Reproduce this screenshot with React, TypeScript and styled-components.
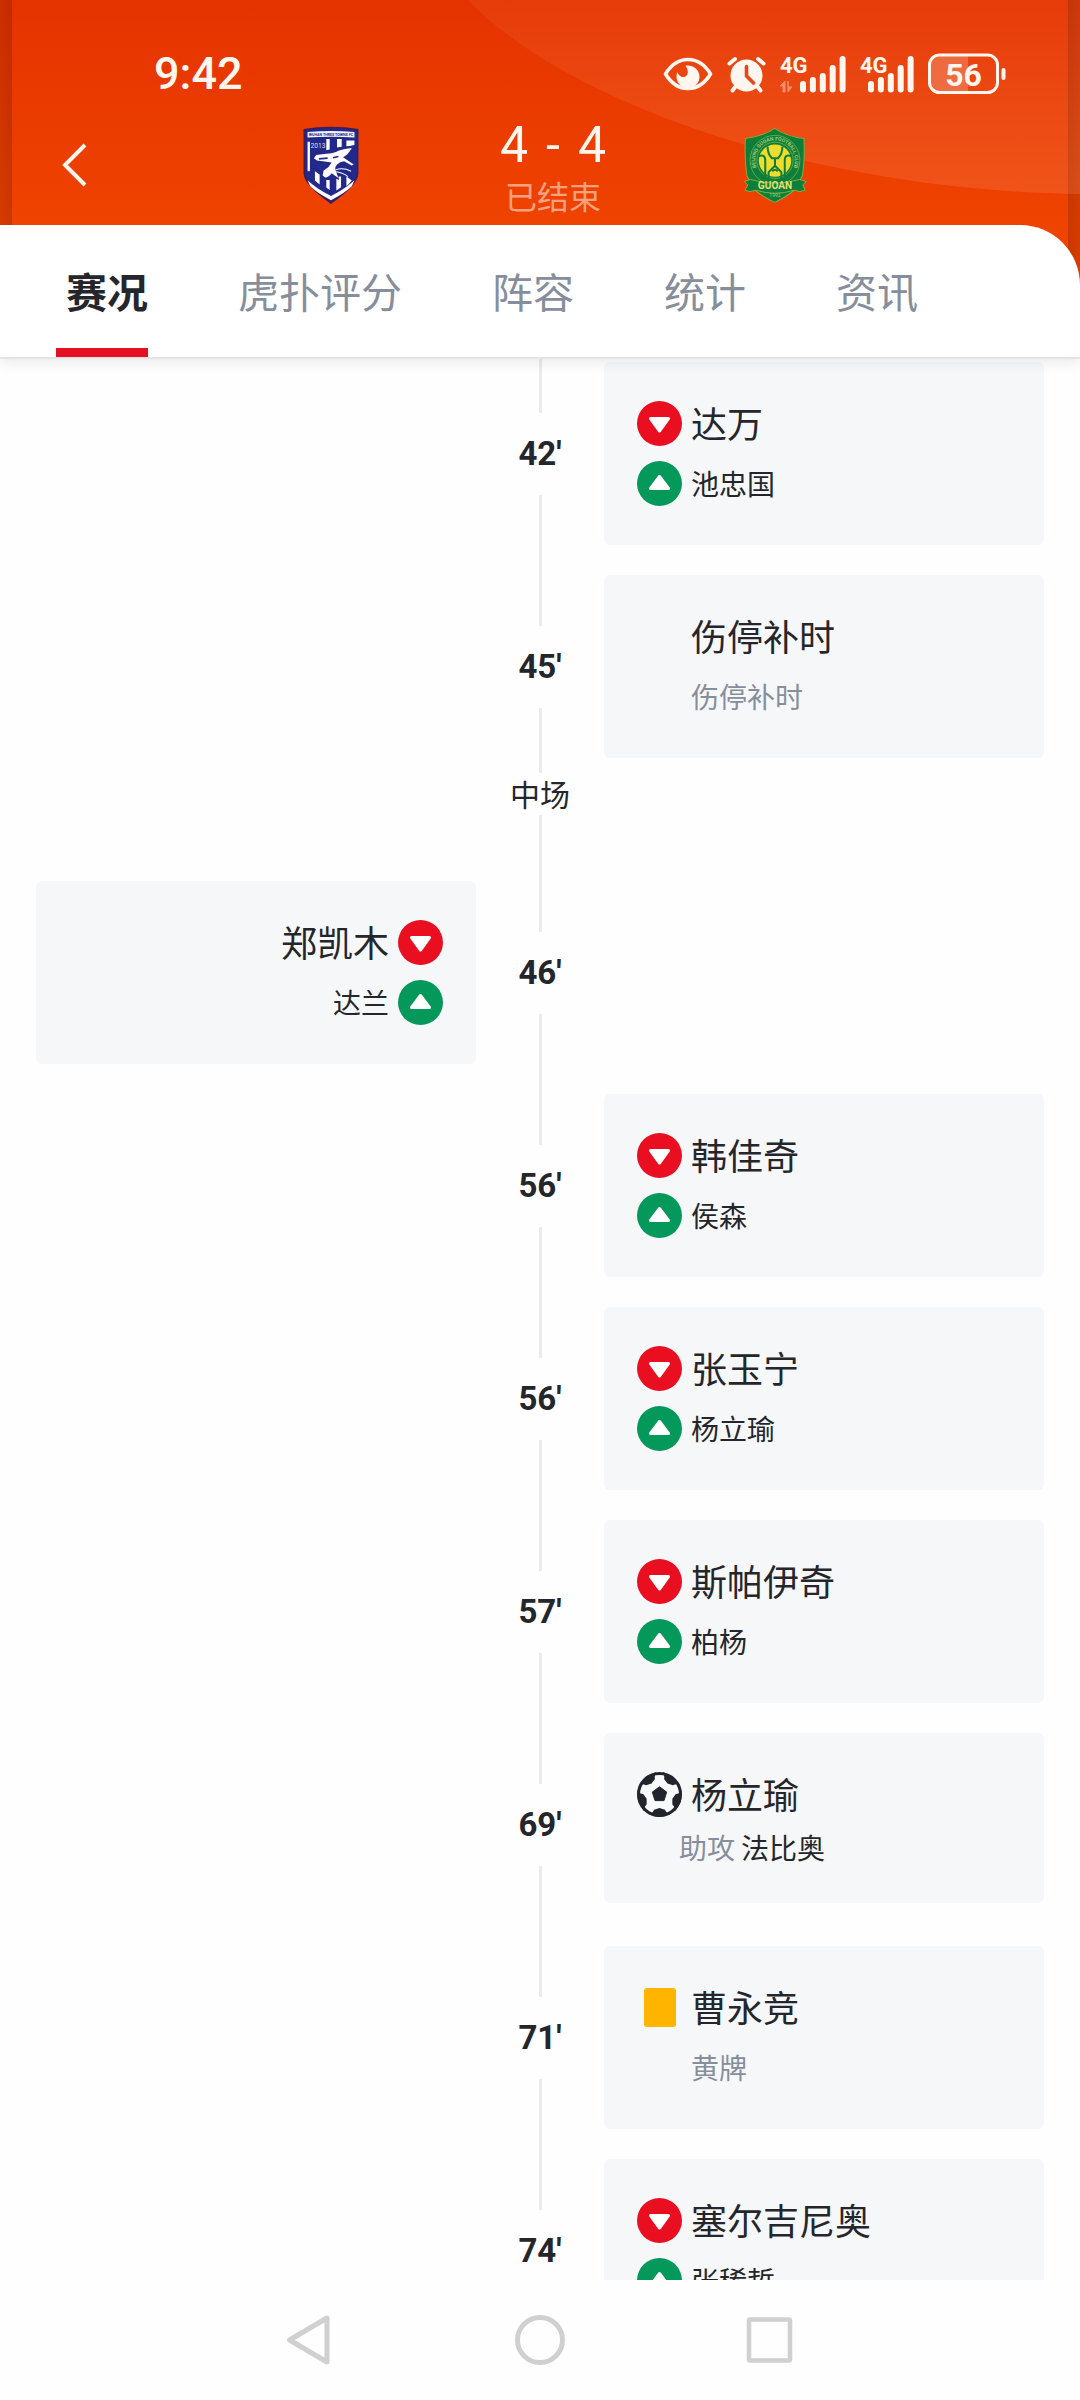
import React from "react";
import styled, { createGlobalStyle } from "styled-components";

const latin = `Roboto, "Noto Sans CJK SC", sans-serif`;

const GlobalStyle = createGlobalStyle`
  * { box-sizing: border-box; }
  body {
    margin: 0;
    background: #fefefe;
    color: #24262b;
    font-family: "Noto Sans CJK SC", "Noto Sans", sans-serif;
  }
  button {
    font: inherit;
    color: inherit;
    background: none;
    border: 0;
    padding: 0;
    cursor: pointer;
  }
  svg { display: block; }
`;

const Screen = styled.div`
  display: flex;
  flex-direction: column;
  height: 100vh;
`;

/* ---------- header ---------- */

const Hero = styled.header`
  position: relative;
  z-index: 1;
  flex: none;
  background:
    linear-gradient(to right, rgba(0, 0, 0, 0.1), rgba(0, 0, 0, 0.16)) left / 12px 100% no-repeat,
    linear-gradient(to left, rgba(0, 0, 0, 0.1), rgba(0, 0, 0, 0.16)) right / 12px 100% no-repeat,
    linear-gradient(#e53300, #ef4300 225px);
  box-shadow: 0 4px 12px rgba(0, 0, 0, 0.08);
`;

const Swoosh = styled.svg`
  position: absolute;
  inset: 0 0 auto 0;
  width: 100%;
  height: 194px;
`;

const StatusBar = styled.div`
  position: relative;
  display: flex;
  align-items: center;
  justify-content: space-between;
  height: 116px;
  padding: 46px 74px 14px 154px;
  color: #fff7ef;
`;

const Clock = styled.time`
  font: 500 45px/56px ${latin};
`;

const StatusIcons = styled.div`
  display: flex;
  align-items: center;
  gap: 14px;
`;

const MatchBar = styled.div`
  position: relative;
  display: flex;
  align-items: center;
  padding: 0 74px 11px 0;
  color: #fff7ef;
`;

const BackButton = styled.button`
  display: flex;
  justify-content: flex-end;
  width: 100px;
  padding: 14px 12px 14px 0;
`;

const Teams = styled.div`
  flex: 1;
  display: flex;
  align-items: center;
  justify-content: center;
  gap: 134px;
`;

const Result = styled.div`
  display: flex;
  flex-direction: column;
  align-items: center;
  gap: 6px;
  min-width: 108px;
  padding: 1px 0 3px;
`;

const Score = styled.div`
  display: flex;
  gap: 18px;
  font: 400 50px/56px ${latin};
`;

const ResultStatus = styled.div`
  font-size: 32px;
  line-height: 32px;
  color: rgba(255, 247, 239, 0.55);
`;

const Tabs = styled.nav`
  position: relative;
  display: flex;
  gap: 80px;
  padding: 0 56px;
  background: #fff;
  border-bottom: 2px solid #e4e4e7;
  border-top-right-radius: 60px;
`;

const Tab = styled.button<{ $active?: boolean }>`
  height: 132px;
  padding: 6px 0 0 10px;
  border-bottom: 9px solid ${(p) => (p.$active ? "#e60f22" : "transparent")};
  font-size: 41px;
  line-height: 48px;
  font-weight: ${(p) => (p.$active ? 700 : 400)};
  color: ${(p) => (p.$active ? "#24262b" : "#868e9c")};
`;

/* ---------- timeline ---------- */

const Scroller = styled.main`
  flex: 1;
  min-height: 0;
  overflow-y: auto;
  scrollbar-width: none;
`;

const Timeline = styled.ol`
  list-style: none;
  margin: -12px 0 0;
  padding: 0 36px;
`;

const EventRow = styled.li`
  display: grid;
  grid-template-columns: 1fr 128px 1fr;
  min-height: 213px;
`;

const Axis = styled.div`
  grid-column: 2;
  grid-row: 1;
  display: flex;
  flex-direction: column;
  align-items: center;
`;

const Line = styled.span`
  flex: 1;
  width: 3px;
  background: #ebebed;
`;

const Minute = styled.time`
  font: 700 33px/82px ${latin};
`;

const Card = styled.article<{ $side: "home" | "away" }>`
  grid-column: ${(p) => (p.$side === "home" ? 1 : 3)};
  grid-row: 1;
  align-self: start;
  display: flex;
  flex-direction: column;
  gap: 15px;
  margin: 15px 0;
  padding: 39px 33px;
  border-radius: 6px;
  background: #f6f7f9;
`;

const Entry = styled.div<{ $side: "home" | "away" }>`
  display: flex;
  flex-direction: ${(p) => (p.$side === "home" ? "row-reverse" : "row")};
  align-items: center;
  gap: 9px;
  min-height: 45px;
`;

const IconSlot = styled.span`
  flex: none;
  display: flex;
  justify-content: center;
  width: 45px;
`;

const Title = styled.span`
  padding-bottom: 3px;
  font-size: 36px;
  line-height: 42px;
`;

const Detail = styled.span<{ $muted?: boolean }>`
  padding-bottom: 2px;
  font-size: 28px;
  line-height: 30px;
  color: ${(p) => (p.$muted ? "#868e9c" : "inherit")};
`;

const Assist = styled.div`
  display: flex;
  gap: 6px;
  padding-left: 42px;
`;

const YellowCard = styled.span`
  width: 32px;
  height: 39px;
  border-radius: 3px;
  background: #ffb400;
`;

const BreakRow = styled.li`
  display: flex;
  flex-direction: column;
  align-items: center;
  height: 93px;
  font-size: 30px;
  line-height: 40px;
`;

const BreakLabel = styled.span`
  padding-bottom: 2px;
`;

/* ---------- system navigation ---------- */

const SystemNav = styled.footer`
  flex: none;
  display: flex;
  align-items: center;
  justify-content: center;
  gap: 180px;
  height: 120px;
`;

/* ---------- drawings ---------- */

const EyeIcon = () => (
  <svg width="50" height="34" viewBox="0 0 50 34" aria-hidden="true">
    <path d="M2.500 17C8 8 16 2.500 25 2.500S42 8 47.500 17C42 26 34 31.500 25 31.500S8 26 2.500 17Z" fill="none" stroke="currentColor" strokeWidth="3.600" strokeLinejoin="round" />
    <path d="M25 8.500c6.500 0 11.500 5 11.500 11.300S31.500 31 25 31 13.500 26 13.500 19.500c0-1.500.3-3 .8-4.200 1.500 3.500 4 5.200 6.700 4.700 4.500-.8 5-6.500 1.500-11.200.8-.2 1.700-.3 2.500-.3Z" fill="currentColor" />
  </svg>
);

const AlarmIcon = () => (
  <svg width="39" height="37" viewBox="0 0 39 37" aria-hidden="true">
    <g stroke="currentColor" strokeWidth="4" strokeLinecap="round">
      <path d="M2.500 7.500 8 3M36.500 7.500 31 3M9 30l-3.500 4.500M30 30l3.500 4.500" />
    </g>
    <circle cx="19.500" cy="19.500" r="16" fill="currentColor" />
    <path d="M19.500 10.500V20l7 7" fill="none" stroke="#e8461a" strokeWidth="3.600" strokeLinecap="round" strokeLinejoin="round" />
  </svg>
);

const barTops = [25, 21, 17, 9, 0];

const SignalIcon = ({ data }: { data?: boolean }) => {
  const start = data ? 20 : 8;
  return (
    <svg width={start + 46} height="49" viewBox={`0 -6 ${start + 46} 49`} aria-hidden="true">
      <text x="0" y="17" fontFamily="Roboto, sans-serif" fontWeight="700" fontSize="22" fill="currentColor">4G</text>
      {data && (
        <path d="M0 30 5 25v11H3v-6ZM8 25v6h4l-4 5Z" fill="currentColor" stroke="currentColor" opacity="0.4" />
      )}
      {barTops.map((top, i) => (
        <rect key={top} x={start + i * 9.900} y={top} width="6" height={36.500 - top} rx="3" fill="currentColor" />
      ))}
    </svg>
  );
};

const BatteryIcon = () => (
  <svg width="78" height="42" viewBox="0 0 78 42" aria-hidden="true">
    <path d="M10 2h30v38H10c-5 0-8-3-8-8V10c0-5 3-8 8-8Z" fill="currentColor" opacity="0.22" />
    <rect x="1.500" y="2" width="68" height="37.500" rx="10" fill="none" stroke="currentColor" strokeWidth="3" />
    <rect x="73.500" y="15" width="4" height="12" rx="2" fill="currentColor" />
    <text x="35.500" y="32.500" textAnchor="middle" fontFamily="Roboto, sans-serif" fontWeight="700" fontSize="32" fill="currentColor">56</text>
  </svg>
);

const HomeCrest = () => (
  <svg width="68" height="78" viewBox="53 45 202 233" role="img" aria-label="武汉三镇">
    <path d="M72 54Q154 40 236 54V188Q234 222 154 278 74 222 72 188Z" fill="#3b1c5c" />
    <path d="M77 58Q154 46 231 58V187Q229 218 154 270 79 218 77 187Z" fill="#22298a" />
    <path d="M84 63Q154 57 224 63V79Q154 75 84 79Z" fill="#f3f4fb" />
    <text x="154" y="75" textAnchor="middle" fontFamily="Roboto, sans-serif" fontWeight="700" fontSize="11" fill="#22298a">WUHAN THREE TOWNS FC</text>
    <g fill="#fff">
      <path d="M84 92h7v88h-7Z" />
      <path d="M140 84h10v34h-10ZM172 84h14v26h-14ZM200 88h24v14l-24 5Z" />
      <path d="M106 180l14 10v30l-14-12ZM140 206h10v30l-10-7ZM170 196h14v32l-14 10ZM200 196l16 12-10 12-6 4Z" />
      <path d="M84 207Q110 232 154 254 198 232 224 207L216 225Q200 242 154 267 108 242 92 225Z" />
    </g>
    <path d="M98 138 112 124 180 108 224 104 214 134 196 144 226 166 190 158 176 166 220 194 176 192 178 206 154 196 138 206 122 194 128 168 104 150Z" fill="#22298a" />
    <path d="M216 111Q205 132 190 138L222 160 216 163 193 150Q180 151 172 160 164 168 168 178L176 200 156 186Q148 198 136 199L129 192 132 178 146 168 156 154 130 150 112 148 103 141 110 132 140 128Q164 126 178 118 194 114 216 111Z" fill="#fff" />
    <path d="M118 143l26-2M160 140l16-4" fill="none" stroke="#22298a" strokeWidth="5" />
    <path d="M168 176Q190 168 214 180M164 182Q185 182 205 196" fill="none" stroke="#fff" strokeWidth="3" />
    <text x="115" y="112" textAnchor="middle" fontFamily="Roboto, sans-serif" fontSize="20" fill="#d9dcf2">2013</text>
  </svg>
);

const AwayCrest = () => (
  <svg width="68" height="78" viewBox="62 48 202 230" role="img" aria-label="北京国安">
    <defs>
      <path id="crest-arc" d="M117 186A59 59 0 1 1 209 186" />
    </defs>
    <path d="M162 54Q196 78 249 84Q252 150 244 196L220 238Q196 258 162 274Q128 258 104 238L80 196Q72 150 75 84Q128 78 162 54Z" fill="#0d7f3b" stroke="#86a83a" strokeWidth="3" />
    <circle cx="163" cy="149" r="74" fill="none" stroke="#8fb944" strokeWidth="2" />
    <circle cx="163" cy="149" r="54" fill="none" stroke="#8fb944" strokeWidth="2" />
    <text fontFamily="Roboto, sans-serif" fontWeight="700" fontSize="15" fill="#a9cb74">
      <textPath href="#crest-arc" startOffset="50%" textAnchor="middle">BEIJING GUOAN FOOTBALL CLUB</textPath>
    </text>
    <circle cx="163" cy="150" r="48" fill="#efdc2c" />
    <g fill="none" stroke="#0d7f3b" strokeWidth="6">
      <path d="M141 108Q141 130 154 143H172Q185 130 185 108" />
      <path d="M112 138Q134 128 134 150V200M214 138Q192 128 192 150V200" />
      <path d="M163 143V165M144 202V184L163 165 182 184V202M155 182Q163 172 171 182" />
    </g>
    <path d="M72 212 90 206Q163 228 236 206L256 212 246 222 252 238Q238 246 220 238 163 256 106 238 88 246 74 238L82 222Z" fill="#0d7f3b" stroke="#8fb944" strokeWidth="2.500" />
    <text x="163" y="235" textAnchor="middle" fontFamily="Roboto, sans-serif" fontWeight="700" fontSize="30" fill="#e6e070">GUOAN</text>
    <text x="163" y="259" textAnchor="middle" fontFamily="Roboto, sans-serif" fontSize="15" fill="#a9cb74">1992</text>
  </svg>
);

const SubOutIcon = () => (
  <svg width="45" height="45" viewBox="0 0 45 45" role="img" aria-label="换下">
    <circle cx="22.500" cy="22.500" r="22.500" fill="#e90f21" />
    <path d="M13.500 17.500h18l-9 12.500Z" fill="#fff" stroke="#fff" strokeWidth="3" strokeLinejoin="round" />
  </svg>
);

const SubInIcon = () => (
  <svg width="45" height="45" viewBox="0 0 45 45" role="img" aria-label="换上">
    <circle cx="22.500" cy="22.500" r="22.500" fill="#05985b" />
    <path d="M13.500 27.500h18l-9-12Z" fill="#fff" stroke="#fff" strokeWidth="3" strokeLinejoin="round" />
  </svg>
);

const GoalIcon = () => (
  <svg width="45" height="45" viewBox="0 0 45 45" role="img" aria-label="进球">
    <circle cx="22.500" cy="22.500" r="21" fill="#f8f9fb" stroke="#23252d" strokeWidth="3" />
    <path d="M22.500 14.800l7.200 5.300-2.700 8.500H18l-2.700-8.500Z" fill="#23252d" stroke="#23252d" strokeWidth="1" strokeLinejoin="round" />
    {[0, 72, 144, 216, 288].map((angle) => (
      <path key={angle} d="M11.500 42.500Q15.500 41.500 17 37.800L22.500 36l5.500 1.800Q29.500 41.500 33.500 42.500L22.500 45Z" fill="#23252d" transform={`rotate(${angle} 22.500 22.500)`} />
    ))}
  </svg>
);

/* ---------- data ---------- */

type Side = "home" | "away";
type MatchEvent =
  | { kind: "sub"; minute: string; side: Side; off: string; on: string }
  | { kind: "goal"; minute: string; side: Side; name: string; assist: string }
  | { kind: "yellow" | "note"; minute: string; side: Side; name: string; detail: string }
  | { kind: "break"; label: string };

const events: MatchEvent[] = [
  { kind: "sub", minute: "42'", side: "away", off: "达万", on: "池忠国" },
  { kind: "note", minute: "45'", side: "away", name: "伤停补时", detail: "伤停补时" },
  { kind: "break", label: "中场" },
  { kind: "sub", minute: "46'", side: "home", off: "郑凯木", on: "达兰" },
  { kind: "sub", minute: "56'", side: "away", off: "韩佳奇", on: "侯森" },
  { kind: "sub", minute: "56'", side: "away", off: "张玉宁", on: "杨立瑜" },
  { kind: "sub", minute: "57'", side: "away", off: "斯帕伊奇", on: "柏杨" },
  { kind: "goal", minute: "69'", side: "away", name: "杨立瑜", assist: "法比奥" },
  { kind: "yellow", minute: "71'", side: "away", name: "曹永竞", detail: "黄牌" },
  { kind: "sub", minute: "74'", side: "away", off: "塞尔吉尼奥", on: "张稀哲" },
];

const tabs = ["赛况", "虎扑评分", "阵容", "统计", "资讯"];

const EventBody = ({ event }: { event: Exclude<MatchEvent, { kind: "break" }> }) => {
  const { side } = event;
  if (event.kind === "sub") {
    return (
      <>
        <Entry $side={side}>
          <IconSlot><SubOutIcon /></IconSlot>
          <Title>{event.off}</Title>
        </Entry>
        <Entry $side={side}>
          <IconSlot><SubInIcon /></IconSlot>
          <Detail>{event.on}</Detail>
        </Entry>
      </>
    );
  }
  if (event.kind === "goal") {
    return (
      <>
        <Entry $side={side}>
          <IconSlot><GoalIcon /></IconSlot>
          <Title>{event.name}</Title>
        </Entry>
        <Assist>
          <Detail $muted>助攻</Detail>
          <Detail>{event.assist}</Detail>
        </Assist>
      </>
    );
  }
  return (
    <>
      <Entry $side={side}>
        <IconSlot>{event.kind === "yellow" && <YellowCard />}</IconSlot>
        <Title>{event.name}</Title>
      </Entry>
      <Entry $side={side}>
        <IconSlot />
        <Detail $muted>{event.detail}</Detail>
      </Entry>
    </>
  );
};

export default function App() {
  return (
    <Screen>
      <GlobalStyle />
      <Hero>
        <Swoosh viewBox="0 0 1080 194" preserveAspectRatio="none" aria-hidden="true">
          <defs>
            <linearGradient id="swoosh" x1="0" y1="0" x2="0" y2="1">
              <stop offset="0" stopColor="#ffe0c8" stopOpacity="0.05" />
              <stop offset="1" stopColor="#ffe0d0" stopOpacity="0.12" />
            </linearGradient>
          </defs>
          <path d="M468 0C560 97 800 190 1080 194V0Z" fill="url(#swoosh)" />
        </Swoosh>
        <StatusBar>
          <Clock>9:42</Clock>
          <StatusIcons>
            <EyeIcon />
            <AlarmIcon />
            <SignalIcon data />
            <SignalIcon />
            <BatteryIcon />
          </StatusIcons>
        </StatusBar>
        <MatchBar>
          <BackButton type="button" aria-label="返回">
            <svg width="26" height="44" viewBox="0 0 26 44" aria-hidden="true">
              <path d="M23 2 3 22l20 20" fill="none" stroke="currentColor" strokeWidth="4" />
            </svg>
          </BackButton>
          <Teams>
            <HomeCrest />
            <Result>
              <Score>
                <span>4</span>
                <span>-</span>
                <span>4</span>
              </Score>
              <ResultStatus>已结束</ResultStatus>
            </Result>
            <AwayCrest />
          </Teams>
        </MatchBar>
        <Tabs>
          {tabs.map((label, i) => (
            <Tab key={label} type="button" $active={i === 0}>{label}</Tab>
          ))}
        </Tabs>
      </Hero>

      <Scroller>
        <Timeline>
          {events.map((event, i) =>
            event.kind === "break" ? (
              <BreakRow key={i}>
                <BreakLabel>{event.label}</BreakLabel>
                <Line />
              </BreakRow>
            ) : (
              <EventRow key={i}>
                <Axis>
                  <Line />
                  <Minute>{event.minute}</Minute>
                  <Line />
                </Axis>
                <Card $side={event.side}>
                  <EventBody event={event} />
                </Card>
              </EventRow>
            )
          )}
        </Timeline>
      </Scroller>

      <SystemNav>
        <button type="button" aria-label="后退">
          <svg width="50" height="50" viewBox="0 0 50 50" fill="none" stroke="#d0d0d0" strokeWidth="5" strokeLinejoin="round">
            <path d="M4.500 25 42 3v44Z" />
          </svg>
        </button>
        <button type="button" aria-label="主屏幕">
          <svg width="50" height="50" viewBox="0 0 50 50" fill="none" stroke="#d0d0d0" strokeWidth="5">
            <circle cx="25" cy="25" r="22.500" />
          </svg>
        </button>
        <button type="button" aria-label="最近任务">
          <svg width="50" height="50" viewBox="0 0 50 50" fill="none" stroke="#d0d0d0" strokeWidth="4.500" strokeLinejoin="round">
            <rect x="4" y="4.500" width="41" height="41" rx="1" />
          </svg>
        </button>
      </SystemNav>
    </Screen>
  );
}
